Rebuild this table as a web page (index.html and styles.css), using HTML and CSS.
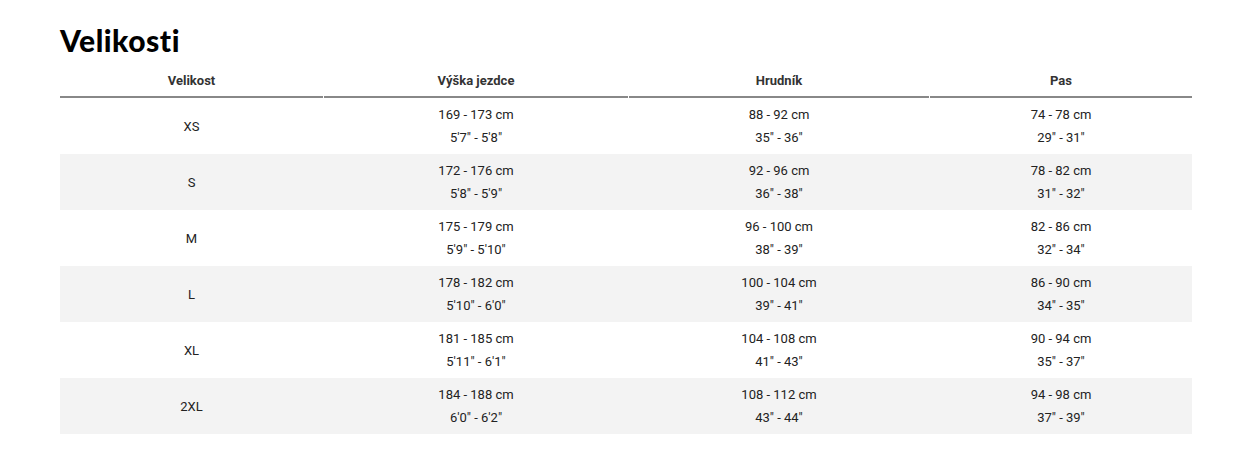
FILE: index.html
```html
<!DOCTYPE html>
<html lang="cs">
<head>
<meta charset="utf-8">
<title>Velikosti</title>
<link rel="stylesheet" href="styles.css">
</head>
<body>
<section class="sizes">
  <h2 class="title">Velikosti</h2>
  <div class="table">
    <div class="head">
      <div class="th">Velikost</div>
      <div class="th">Výška jezdce</div>
      <div class="th">Hrudník</div>
      <div class="th">Pas</div>
    </div>
    <div class="row">
      <div class="td size">XS</div>
      <div class="td"><span>169 - 173 cm</span><span>5'7" - 5'8"</span></div>
      <div class="td"><span>88 - 92 cm</span><span>35" - 36"</span></div>
      <div class="td"><span>74 - 78 cm</span><span>29" - 31"</span></div>
    </div>
    <div class="row alt">
      <div class="td size">S</div>
      <div class="td"><span>172 - 176 cm</span><span>5'8" - 5'9"</span></div>
      <div class="td"><span>92 - 96 cm</span><span>36" - 38"</span></div>
      <div class="td"><span>78 - 82 cm</span><span>31" - 32"</span></div>
    </div>
    <div class="row">
      <div class="td size">M</div>
      <div class="td"><span>175 - 179 cm</span><span>5'9" - 5'10"</span></div>
      <div class="td"><span>96 - 100 cm</span><span>38" - 39"</span></div>
      <div class="td"><span>82 - 86 cm</span><span>32" - 34"</span></div>
    </div>
    <div class="row alt">
      <div class="td size">L</div>
      <div class="td"><span>178 - 182 cm</span><span>5'10" - 6'0"</span></div>
      <div class="td"><span>100 - 104 cm</span><span>39" - 41"</span></div>
      <div class="td"><span>86 - 90 cm</span><span>34" - 35"</span></div>
    </div>
    <div class="row">
      <div class="td size">XL</div>
      <div class="td"><span>181 - 185 cm</span><span>5'11" - 6'1"</span></div>
      <div class="td"><span>104 - 108 cm</span><span>41" - 43"</span></div>
      <div class="td"><span>90 - 94 cm</span><span>35" - 37"</span></div>
    </div>
    <div class="row alt">
      <div class="td size">2XL</div>
      <div class="td"><span>184 - 188 cm</span><span>6'0" - 6'2"</span></div>
      <div class="td"><span>108 - 112 cm</span><span>43" - 44"</span></div>
      <div class="td"><span>94 - 98 cm</span><span>37" - 39"</span></div>
    </div>
  </div>
</section>
</body>
</html>
```
FILE: styles.css
```css
html, body {
  margin: 0;
  padding: 0;
  background: #fff;
}
body {
  font-family: Roboto, "Liberation Sans", sans-serif;
  color: #222;
}
.sizes {
  width: 1132px;
  padding: 22px 0 0 60px;
}
.title {
  margin: 0;
  font-family: Lato, "Liberation Sans", sans-serif;
  font-weight: 900;
  font-size: 30px;
  line-height: 36px;
  color: #000;
  letter-spacing: 0.5px;
}
.head,
.row {
  display: grid;
  grid-template-columns: 263px 304px 300px 262px;
}
.head {
  column-gap: 1px;
}
.th {
  font-size: 13px;
  font-weight: 700;
  color: #333;
  text-align: center;
  line-height: 16px;
  padding: 15px 0 7px;
  border-bottom: 2px solid #888;
}
.row {
  column-gap: 1px;
  height: 56px;
}
.row.alt {
  background: #f3f3f3;
}
.td {
  font-size: 13px;
  color: #222;
  display: flex;
  flex-direction: column;
  align-items: center;
  justify-content: center;
  line-height: 23px;
}
```
